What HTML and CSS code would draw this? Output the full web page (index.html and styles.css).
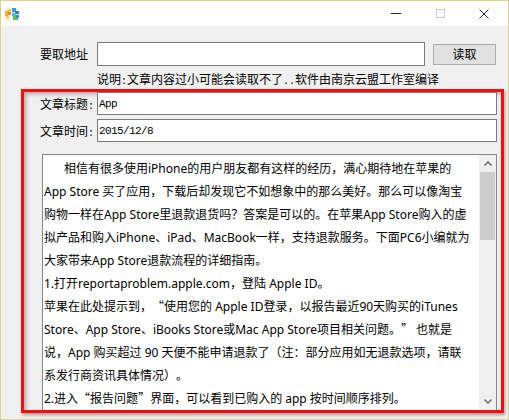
FILE: index.html
```html
<!DOCTYPE html>
<html lang="zh-CN">
<head>
<meta charset="utf-8">
<title>要取地址</title>
<link rel="stylesheet" href="styles.css">
</head>
<body>
<div class="window">
  <div class="titlebar">
    <svg class="app-icon" width="15" height="12" viewBox="0 0 15 12">
      <rect x="0" y="3" width="3" height="5" fill="#f2a93b"/>
      <rect x="2" y="1" width="4" height="3" fill="#f7c948"/>
      <rect x="3" y="4" width="3" height="3" fill="#e98a2a"/>
      <rect x="1" y="8" width="3" height="3" fill="#f5d36a"/>
      <rect x="7" y="0" width="4" height="4" fill="#3a9be0"/>
      <rect x="10" y="3" width="4" height="3" fill="#2f7fd0"/>
      <rect x="7" y="5" width="4" height="3" fill="#4cb8e6"/>
      <rect x="8" y="8" width="5" height="4" fill="#5bbf4a"/>
      <rect x="11" y="7" width="3" height="3" fill="#2f8fd8"/>
    </svg>
    <div class="caption-buttons">
      <span class="cap"><span class="min-line"></span></span>
      <span class="cap"><span class="max-box"></span></span>
      <span class="cap">
        <svg width="10" height="10" viewBox="0 0 10 10"><path d="M0.5 0.5 L9.5 9.5 M9.5 0.5 L0.5 9.5" stroke="#2b2b2b" stroke-width="1" fill="none"/></svg>
      </span>
    </div>
  </div>
  <div class="client">
    <div class="url-row">
      <span class="label">要取地址</span>
      <div class="input url"></div>
      <button class="btn">读取</button>
    </div>
    <div class="note">说明<span class="h">:</span>文章内容过小可能会读取不了<span class="h">..</span>软件由南京云盟工作室编译</div>
    <div class="mark">
      <div class="field-row">
        <span class="label">文章标题<span class="h">:</span></span>
        <div class="input mono">App</div>
      </div>
      <div class="field-row">
        <span class="label">文章时间<span class="h">:</span></span>
        <div class="input mono">2015/12/8</div>
      </div>
      <div class="memo">
        <div class="memo-text">
          <div class="line first">相信有很多使用iPhone的用户朋友都有这样的经历，满心期待地在苹果的</div>
          <div class="line">App Store 买了应用，下载后却发现它不如想象中的那么美好。那么可以像淘宝</div>
          <div class="line">购物一样在App Store里退款退货吗？答案是可以的。在苹果App Store购入的虚</div>
          <div class="line">拟产品和购入iPhone、iPad、MacBook一样，支持退款服务。下面PC6小编就为</div>
          <div class="line">大家带来App Store退款流程的详细指南。</div>
          <div class="line">1.打开reportaproblem.apple.com，登陆 Apple ID。</div>
          <div class="line">苹果在此处提示到，<span class="q">“</span>使用您的 Apple ID登录，以报告最近90天购买的iTunes</div>
          <div class="line">Store、App Store、iBooks Store或Mac App Store项目相关问题。<span class="q">”</span> 也就是</div>
          <div class="line">说，App 购买超过 90 天便不能申请退款了（注：部分应用如无退款选项，请联</div>
          <div class="line">系发行商资讯具体情况）。</div>
          <div class="line">2.进入<span class="q">“</span>报告问题<span class="q">”</span>界面，可以看到已购入的 app 按时间顺序排列。</div>
        </div>
        <div class="scrollbar">
          <div class="arrow">
            <svg width="8" height="5" viewBox="0 0 8 5"><path d="M0.5 4.5 L4 1 L7.5 4.5" stroke="#606060" stroke-width="1.4" fill="none"/></svg>
          </div>
          <div class="thumb"></div>
          <div class="track"></div>
          <div class="arrow">
            <svg width="8" height="5" viewBox="0 0 8 5"><path d="M0.5 0.5 L4 4 L7.5 0.5" stroke="#606060" stroke-width="1.4" fill="none"/></svg>
          </div>
        </div>
      </div>
    </div>
  </div>
</div>
</body>
</html>
```

FILE: styles.css
```css
html, body {
  margin: 0;
  padding: 0;
}
body {
  width: 509px;
  height: 420px;
  overflow: hidden;
  background: #f0f0f0;
  font-family: "Noto Sans CJK SC", sans-serif;
  font-size: 12px;
  color: #000;
  text-spacing-trim: space-all;
}
.window {
  box-sizing: border-box;
  width: 509px;
  height: 420px;
  border: 1px solid #d9d28a;
  display: flex;
  flex-direction: column;
  background: #f0f0f0;
}
.titlebar {
  height: 25px;
  flex: none;
  background: #fff;
  display: flex;
  align-items: center;
}
.app-icon {
  margin-left: 4px;
  flex: none;
}
.caption-buttons {
  margin-left: auto;
  margin-right: 2px;
  display: flex;
  height: 25px;
}
.cap {
  width: 44px;
  height: 25px;
  display: flex;
  align-items: center;
  justify-content: center;
}
.min-line {
  width: 10px;
  height: 1px;
  background: #2b2b2b;
}
.max-box {
  box-sizing: border-box;
  width: 9px;
  height: 9px;
  border: 1px solid #c9c9c9;
}
.client {
  flex: 1;
  display: flex;
  flex-direction: column;
  min-height: 0;
}
.url-row {
  margin-top: 16px;
  padding-left: 39px;
  display: flex;
  align-items: center;
  height: 24px;
  flex: none;
}
.label {
  width: 57px;
  height: 14px;
  flex: none;
  font-size: 12px;
  line-height: 14px;
  white-space: nowrap;
}
.h {
  font-family: "Liberation Mono", monospace;
  font-size: 10px;
  line-height: 10px;
}
.input {
  box-sizing: border-box;
  background: #fff;
  border: 1px solid #7a7a7a;
  height: 24px;
  padding-left: 1px;
  display: flex;
  align-items: center;
}
.input.url {
  width: 328px;
}
.btn {
  box-sizing: border-box;
  margin-left: 8px;
  width: 63px;
  height: 21px;
  background: #e1e1e1;
  border: 1px solid #adadad;
  font-family: "Noto Sans CJK SC", sans-serif;
  font-size: 12px;
  line-height: 14px;
  padding: 0;
  color: #000;
}
.note {
  margin-top: 6px;
  padding-left: 96px;
  height: 14px;
  flex: none;
  font-size: 12px;
  line-height: 14px;
  white-space: nowrap;
}
.mark {
  box-sizing: border-box;
  margin-top: 3px;
  margin-left: 20px;
  width: 483px;
  height: 324px;
  flex: none;
  border: 3px solid #ff0a0a;
  box-shadow: 1px 2px 3px rgba(0, 0, 0, 0.35), inset 2px 2px 4px rgba(0, 0, 0, 0.3);
  padding: 0 4px 0 16px;
  display: flex;
  flex-direction: column;
}
.field-row {
  display: flex;
  align-items: center;
  height: 23px;
  flex: none;
  margin-bottom: 4px;
}
.field-row .input {
  flex: 1;
  height: 23px;
}
.mono {
  font-family: "Liberation Mono", "Noto Sans CJK SC", monospace;
  font-size: 11px;
  letter-spacing: -0.6px;
}
.memo {
  margin-top: 8px;
  margin-left: 2px;
  flex: 1;
  min-height: 0;
  background: #fff;
  border: 1px solid #828790;
  border-bottom: none;
  display: flex;
}
.memo-text {
  flex: 1;
  min-width: 0;
  overflow: hidden;
  padding: 2px 0 0 1px;
  font-family: "Noto Sans", "Noto Sans CJK SC", sans-serif;
  font-size: 12px;
  line-height: 23px;
  white-space: nowrap;
}
.line {
  height: 23px;
}
.q {
  font-family: "Noto Sans CJK SC", sans-serif;
  line-height: 12px;
}
.line.first {
  padding-left: 20px;
}
.scrollbar {
  width: 17px;
  flex: none;
  background: #f0f0f0;
  display: flex;
  flex-direction: column;
}
.arrow {
  height: 17px;
  flex: none;
  display: flex;
  align-items: center;
  justify-content: center;
}
.thumb {
  height: 68px;
  flex: none;
  margin: 0 1px;
  background: #cdcdcd;
}
.track {
  flex: 1;
}
```
